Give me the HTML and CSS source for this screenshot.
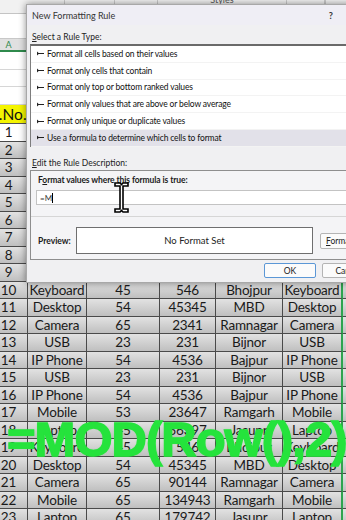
FILE: index.html
```html
<!DOCTYPE html>
<html lang="en">
<head>
  <meta charset="UTF-8">
  <title>New Formatting Rule</title>
  <link rel="stylesheet" href="styles.css">
</head>
<body>
  <!-- Ribbon strip -->
  <div class="ribbon">
    <div class="rgroup w65"></div>
    <div class="rgroup w50"></div>
    <div class="rgroup w43"></div>
    <div class="rgroup w129"><span class="rlabel">Styles</span></div>
    <div class="rgroup w38"></div>
    <div class="rgroup"></div>
  </div>
  <div class="formula-area"></div>

  <!-- Worksheet -->
  <div class="grid">
    <div class="row colhead">
      <div class="c ca sel">A</div><div class="c cb">B</div><div class="c cc">C</div><div class="c cd">D</div><div class="c ce">E</div><div class="c cf">F</div><div class="c cg">G</div>
    </div>
    <div class="row blank"><div class="c ca"></div><div class="c cb"></div><div class="c cc"></div><div class="c cd"></div><div class="c ce"></div><div class="c cf"></div><div class="c cg"></div></div>
    <div class="row blank"><div class="c ca"></div><div class="c cb"></div><div class="c cc"></div><div class="c cd"></div><div class="c ce"></div><div class="c cf"></div><div class="c cg"></div></div>
    <div class="row blank"><div class="c ca"></div><div class="c cb"></div><div class="c cc"></div><div class="c cd"></div><div class="c ce"></div><div class="c cf"></div><div class="c cg"></div></div>
    <div class="row head">
      <div class="c ca">S.No.</div><div class="c cb">Product</div><div class="c cc">Qty</div><div class="c cd">Price</div><div class="c ce">City</div><div class="c cf">Item</div><div class="c cg"></div>
    </div>
    <div class="row data first"><div class="c ca">1</div><div class="c cb">Laptop</div><div class="c cc">45</div><div class="c cd">5397</div><div class="c ce">Jasupr</div><div class="c cf">Laptop</div><div class="c cg"></div></div>
    <div class="row data"><div class="c ca">2</div><div class="c cb">Keyboard</div><div class="c cc">45</div><div class="c cd">546</div><div class="c ce">Bhojpur</div><div class="c cf">Keyboard</div><div class="c cg"></div></div>
    <div class="row data"><div class="c ca">3</div><div class="c cb">Desktop</div><div class="c cc">54</div><div class="c cd">45345</div><div class="c ce">MBD</div><div class="c cf">Desktop</div><div class="c cg"></div></div>
    <div class="row data"><div class="c ca">4</div><div class="c cb">Camera</div><div class="c cc">65</div><div class="c cd">2341</div><div class="c ce">Ramnagar</div><div class="c cf">Camera</div><div class="c cg"></div></div>
    <div class="row data"><div class="c ca">5</div><div class="c cb">USB</div><div class="c cc">23</div><div class="c cd">231</div><div class="c ce">Bijnor</div><div class="c cf">USB</div><div class="c cg"></div></div>
    <div class="row data"><div class="c ca">6</div><div class="c cb">IP Phone</div><div class="c cc">54</div><div class="c cd">4536</div><div class="c ce">Bajpur</div><div class="c cf">IP Phone</div><div class="c cg"></div></div>
    <div class="row data"><div class="c ca">7</div><div class="c cb">Mobile</div><div class="c cc">53</div><div class="c cd">23647</div><div class="c ce">Ramgarh</div><div class="c cf">Mobile</div><div class="c cg"></div></div>
    <div class="row data"><div class="c ca">8</div><div class="c cb">Laptop</div><div class="c cc">45</div><div class="c cd">5397</div><div class="c ce">Jasupr</div><div class="c cf">Laptop</div><div class="c cg"></div></div>
    <div class="row data"><div class="c ca">9</div><div class="c cb">Keyboard</div><div class="c cc">45</div><div class="c cd">546</div><div class="c ce">Bhojpur</div><div class="c cf">Keyboard</div><div class="c cg"></div></div>
    <div class="row data"><div class="c ca">10</div><div class="c cb">Keyboard</div><div class="c cc">45</div><div class="c cd">546</div><div class="c ce">Bhojpur</div><div class="c cf">Keyboard</div><div class="c cg"></div></div>
    <div class="row data"><div class="c ca">11</div><div class="c cb">Desktop</div><div class="c cc">54</div><div class="c cd">45345</div><div class="c ce">MBD</div><div class="c cf">Desktop</div><div class="c cg"></div></div>
    <div class="row data"><div class="c ca">12</div><div class="c cb">Camera</div><div class="c cc">65</div><div class="c cd">2341</div><div class="c ce">Ramnagar</div><div class="c cf">Camera</div><div class="c cg"></div></div>
    <div class="row data"><div class="c ca">13</div><div class="c cb">USB</div><div class="c cc">23</div><div class="c cd">231</div><div class="c ce">Bijnor</div><div class="c cf">USB</div><div class="c cg"></div></div>
    <div class="row data"><div class="c ca">14</div><div class="c cb">IP Phone</div><div class="c cc">54</div><div class="c cd">4536</div><div class="c ce">Bajpur</div><div class="c cf">IP Phone</div><div class="c cg"></div></div>
    <div class="row data"><div class="c ca">15</div><div class="c cb">USB</div><div class="c cc">23</div><div class="c cd">231</div><div class="c ce">Bijnor</div><div class="c cf">USB</div><div class="c cg"></div></div>
    <div class="row data"><div class="c ca">16</div><div class="c cb">IP Phone</div><div class="c cc">54</div><div class="c cd">4536</div><div class="c ce">Bajpur</div><div class="c cf">IP Phone</div><div class="c cg"></div></div>
    <div class="row data"><div class="c ca">17</div><div class="c cb">Mobile</div><div class="c cc">53</div><div class="c cd">23647</div><div class="c ce">Ramgarh</div><div class="c cf">Mobile</div><div class="c cg"></div></div>
    <div class="row data"><div class="c ca">18</div><div class="c cb">Laptop</div><div class="c cc">45</div><div class="c cd">56397</div><div class="c ce">Jasupr</div><div class="c cf">Laptop</div><div class="c cg"></div></div>
    <div class="row data"><div class="c ca">19</div><div class="c cb">Keyboard</div><div class="c cc">45</div><div class="c cd">546</div><div class="c ce">Bhojpur</div><div class="c cf">Keyboard</div><div class="c cg"></div></div>
    <div class="row data"><div class="c ca">20</div><div class="c cb">Desktop</div><div class="c cc">54</div><div class="c cd">45345</div><div class="c ce">MBD</div><div class="c cf">Desktop</div><div class="c cg"></div></div>
    <div class="row data"><div class="c ca">21</div><div class="c cb">Camera</div><div class="c cc">65</div><div class="c cd">90144</div><div class="c ce">Ramnagar</div><div class="c cf">Camera</div><div class="c cg"></div></div>
    <div class="row data"><div class="c ca">22</div><div class="c cb">Mobile</div><div class="c cc">65</div><div class="c cd">134943</div><div class="c ce">Ramgarh</div><div class="c cf">Mobile</div><div class="c cg"></div></div>
    <div class="row data"><div class="c ca">23</div><div class="c cb">Laptop</div><div class="c cc">65</div><div class="c cd">179742</div><div class="c ce">Jasupr</div><div class="c cf">Laptop</div><div class="c cg"></div></div>
  </div>

  <!-- New Formatting Rule dialog -->
  <div class="dialog">
    <div class="dlg-title">
      <span>New Formatting Rule</span>
      <span class="help">?</span>
    </div>
    <div class="dlg-label"><u>S</u>elect a Rule Type:</div>
    <ul class="rule-list">
      <li><svg class="arr" width="7" height="5" viewBox="0 0 7 5"><path d="M0 0.6L2.2 2.5L0 4.4Z" fill="#222"/><path d="M0.5 2.5H7" stroke="#222" stroke-width="1"/></svg>Format all cells based on their values</li>
      <li><svg class="arr" width="7" height="5" viewBox="0 0 7 5"><path d="M0 0.6L2.2 2.5L0 4.4Z" fill="#222"/><path d="M0.5 2.5H7" stroke="#222" stroke-width="1"/></svg>Format only cells that contain</li>
      <li><svg class="arr" width="7" height="5" viewBox="0 0 7 5"><path d="M0 0.6L2.2 2.5L0 4.4Z" fill="#222"/><path d="M0.5 2.5H7" stroke="#222" stroke-width="1"/></svg>Format only top or bottom ranked values</li>
      <li><svg class="arr" width="7" height="5" viewBox="0 0 7 5"><path d="M0 0.6L2.2 2.5L0 4.4Z" fill="#222"/><path d="M0.5 2.5H7" stroke="#222" stroke-width="1"/></svg>Format only values that are above or below average</li>
      <li><svg class="arr" width="7" height="5" viewBox="0 0 7 5"><path d="M0 0.6L2.2 2.5L0 4.4Z" fill="#222"/><path d="M0.5 2.5H7" stroke="#222" stroke-width="1"/></svg>Format only unique or duplicate values</li>
      <li class="active"><svg class="arr" width="7" height="5" viewBox="0 0 7 5"><path d="M0 0.6L2.2 2.5L0 4.4Z" fill="#222"/><path d="M0.5 2.5H7" stroke="#222" stroke-width="1"/></svg>Use a formula to determine which cells to format</li>
    </ul>
    <div class="dlg-label second"><u>E</u>dit the Rule Description:</div>
    <div class="desc-box">
      <div class="desc-top">
        <div class="desc-title">F<u>o</u>rmat values where this formula is true:</div>
        <div class="formula-input">=M<span class="caret"></span></div>
      </div>
      <div class="preview-row">
        <span class="preview-label">Preview:</span>
        <div class="preview-box">No Format Set</div>
        <button class="btn format-btn"><u>F</u>ormat...</button>
      </div>
    </div>
    <div class="dlg-buttons">
      <button class="btn ok">OK</button>
      <button class="btn">Cancel</button>
    </div>
  </div>

  <!-- mouse text cursor -->
  <svg class="ibeam" width="15" height="31" viewBox="0 0 15 31">
    <path d="M1 1H6L7.5 2.5L9 1H14V4H9V27H14V30H9L7.5 28.5L6 30H1V27H6V4H1Z" fill="#fff" stroke="#000" stroke-width="1.6" stroke-linejoin="miter"/>
  </svg>

  <!-- caption over the video -->
  <div class="caption">=MOD(Row(),2)</div>
</body>
</html>
```

FILE: styles.css
```css
/* Reset */
* {
  box-sizing: border-box;
  margin: 0;
  padding: 0;
}

body {
  width: 346px;
  height: 520px;
  overflow: hidden;
  position: relative;
  background: #ffffff;
  font-family: Lato, "Liberation Sans", sans-serif;
}

/* Ribbon strip */
.ribbon {
  height: 14px;
  display: flex;
  background: #f1f1f1;
  border-bottom: 1px solid #c4c4c4;
  overflow: hidden;
}

.rgroup {
  flex: none;
  border-right: 1px solid #c9c9c9;
  text-align: center;
}

.w65 { width: 65px; }
.w50 { width: 50px; }
.w43 { width: 43px; }
.w129 { width: 129px; }
.w38 { width: 38px; }

.rlabel {
  display: block;
  margin-top: -5px;
  font-size: 9px;
  line-height: 9px;
  color: #555;
}

.formula-area {
  height: 24px;
}

/* Worksheet grid */
.grid {
  margin-left: -10px;
}

.row {
  display: flex;
  height: 17.5px;
}

.c {
  flex: none;
  display: flex;
  align-items: center;
  justify-content: center;
  white-space: nowrap;
  overflow: hidden;
  border-right: 1px solid #d6d6d6;
  border-bottom: 1px solid #d6d6d6;
}

.ca { width: 38px; }
.cb { width: 59px; }
.cc { width: 73px; }
.cd { width: 56px; }
.ce { width: 67px; }
.cf { width: 60px; border-right: 2px solid #2fa44f; }
.cg { width: 30px; }

.colhead {
  height: 14px;
  border-top: 1px solid #c8c8c8;
  background: #e8e8e8;
}

.colhead .c {
  font-size: 9px;
  color: #666;
  border-right-color: #c4c4c4;
  border-bottom: 1px solid #c4c4c4;
}

.colhead .c.sel {
  color: #2f8a4c;
  background: #e0e0e0;
  border-bottom: 2px solid #2f8a4c;
}

.blank {
  height: 17.5px;
}

.head {
  height: 19.5px;
  background: #f4f400;
  font-size: 15.5px;
  color: #111;
}

.head .c {
  border-color: #555;
}

.data {
  font-size: 13.5px;
  letter-spacing: -0.2px;
  color: #1a1a1a;
  background: linear-gradient(#e2e2e2, #bdbdbd);
}

.data .c {
  border-right-color: #4a4a4a;
  border-bottom-color: #4a4a4a;
}

.data .c.cf {
  border-right: 2px solid #2fa44f;
}

.data.first {
  background: #ffffff;
}

/* Dialog */
.dialog {
  position: absolute;
  left: 26px;
  top: 4px;
  width: 340px;
  height: 279px;
  background: #f0f0f2;
  border: 1px solid #a8a8a8;
  box-shadow: 0 0 7px rgba(0, 0, 0, 0.45);
  font-size: 8.5px;
  color: #1b1b1b;
}

.dlg-title {
  height: 20px;
  display: flex;
  align-items: center;
  padding-left: 5px;
  font-size: 9px;
  color: #333;
  background: #efeef5;
}

.help {
  margin-left: auto;
  margin-right: 32px;
  font-weight: bold;
}

.dlg-label {
  height: 19px;
  padding: 7px 0 0 5px;
  line-height: 11px;
  color: #222;
}

.dlg-label.second {
  height: 23px;
  padding-top: 11px;
}

.rule-list {
  list-style: none;
  margin-left: 3px;
  width: 330px;
  height: 103px;
  background: #ffffff;
  border: 1px solid #7d7d7d;
  border-top: 2px solid #6a6a6a;
}

.rule-list li {
  height: 16.8px;
  display: flex;
  align-items: center;
  padding-left: 6px;
  border-bottom: 1px solid #f3f3f3;
  color: #111;
  letter-spacing: -0.15px;
}

.rule-list li.active {
  background: #e2e1e9;
}

.arr {
  flex: none;
  margin-right: 3px;
}

.desc-box {
  margin-left: 3px;
  width: 330px;
  height: 90px;
  border: 1px solid #8e8e8e;
  background: #f4f4f6;
}

.desc-top {
  padding: 4px 0 11px 5px;
  border-bottom: 1px solid #d6d6d6;
}

.desc-title {
  line-height: 11px;
  font-weight: bold;
  padding-left: 2px;
  letter-spacing: -0.1px;
}

.formula-input {
  margin-top: 4px;
  height: 15px;
  background: #ffffff;
  border: 1px solid #c3c3c3;
  padding-left: 3px;
  display: flex;
  align-items: center;
  font-size: 8px;
  color: #333;
}

.caret {
  width: 1px;
  height: 10px;
  background: #000;
}

.preview-row {
  display: flex;
  align-items: center;
  padding-top: 10px;
}

.preview-row > * {
  flex: none;
}

.preview-label {
  width: 45px;
  padding-left: 7px;
  font-weight: bold;
}

.preview-box {
  width: 237px;
  height: 27px;
  background: #ffffff;
  border: 1px solid #6f6f6f;
  display: flex;
  align-items: center;
  justify-content: center;
  font-size: 9.5px;
  color: #222;
}

.btn {
  flex: none;
  font-family: Lato, "Liberation Sans", sans-serif;
  font-size: 8.5px;
  color: #222;
  background: #fbfbfb;
  border: 1px solid #b4b4b4;
  border-radius: 2px;
  width: 52px;
  height: 15px;
}

.format-btn {
  margin-left: 7px;
  height: 16px;
  width: 60px;
  text-align: left;
  padding-left: 5px;
}

.dlg-buttons {
  display: flex;
  gap: 6px;
  padding: 3px 0 0 237px;
}

.btn.ok {
  border-color: #5b97d6;
}

/* Overlays */
.ibeam {
  position: absolute;
  left: 114px;
  top: 182px;
}

.caption {
  position: absolute;
  left: 7px;
  top: 415px;
  font-family: "Liberation Sans", Arial, sans-serif;
  font-weight: bold;
  font-size: 49px;
  line-height: 49px;
  letter-spacing: -1px;
  color: #25e33c;
  -webkit-text-stroke: 1.4px #25e33c;
  text-shadow: 0 0 2px rgba(40, 230, 60, 0.6);
  white-space: nowrap;
}
```
